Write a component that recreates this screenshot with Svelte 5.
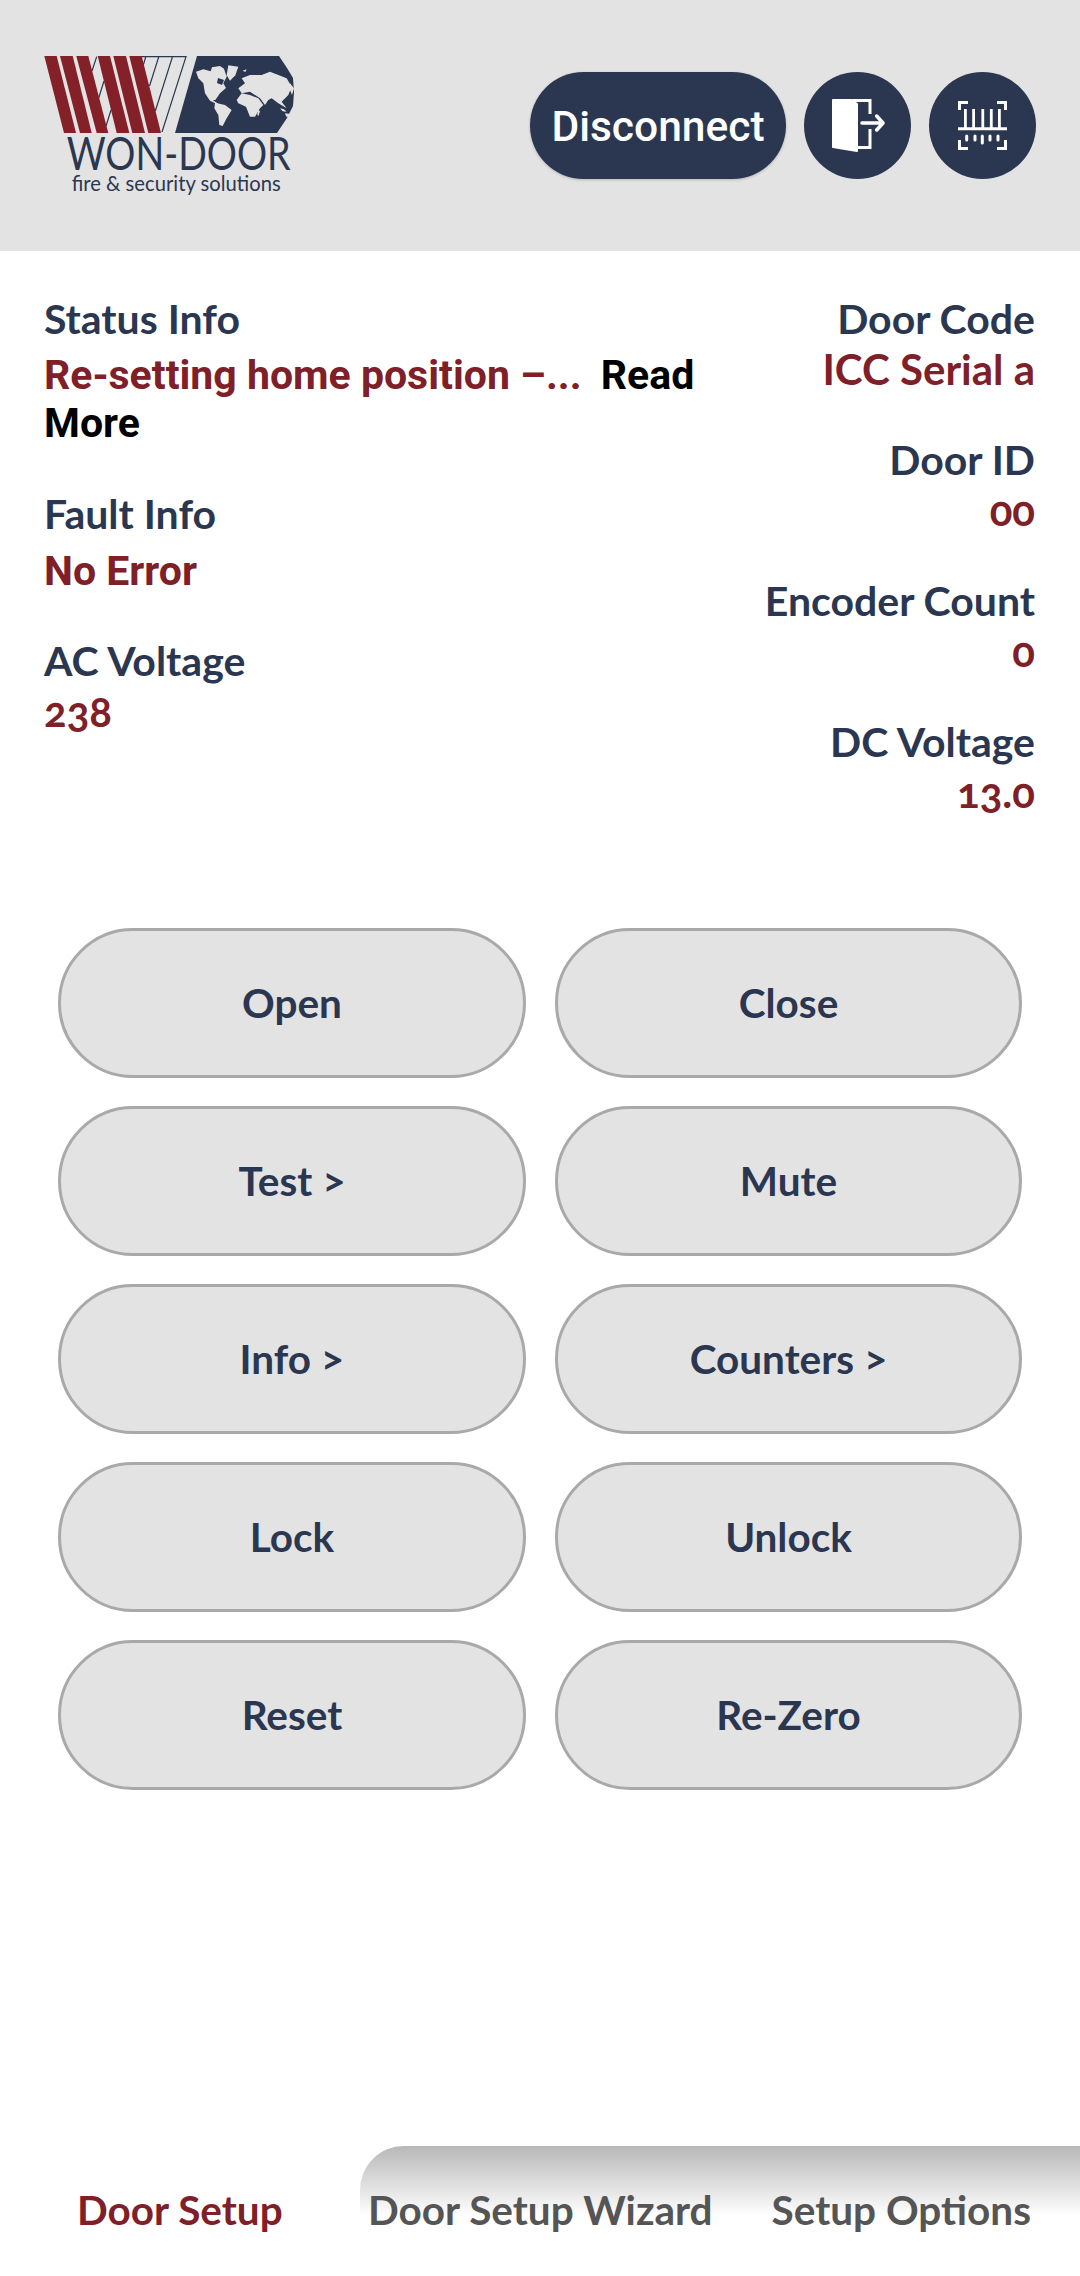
<script lang="ts">
	const leftInfo = [
		{ label: 'Fault Info', value: 'No Error', cls: 'roboto' },
		{ label: 'AC Voltage', value: '238', cls: 'num' }
	];
	const rightInfo = [
		{ label: 'Door Code', value: 'ICC Serial a' },
		{ label: 'Door ID', value: '00' },
		{ label: 'Encoder Count', value: '0' },
		{ label: 'DC Voltage', value: '13.0' }
	];
	const actions = ['Open', 'Close', 'Test >', 'Mute', 'Info >', 'Counters >', 'Lock', 'Unlock', 'Reset', 'Re-Zero'];
</script>

<div class="page">
	<header class="top">
		<svg class="logo" viewBox="0 0 252 144" aria-label="Won-Door logo">
			<g fill="none" stroke="#2b3750" stroke-width="1.2">
				<path d="M52.700 0.600 48 15M60 25 54.700 42M67 54 62 70" />
				<path d="M97 0.600h45L118 76M128.700 0 111.300 55M115 0 105.500 30M102 0 99 10" />
			</g>
			<g fill="#842028">
				<path d="M0.300 0h12.400L32 77H20z" />
				<path d="M16 0h12.700L47.700 77H36z" />
				<path d="M32.300 0h12L64.300 77H52.700z" />
				<path d="M53.700 0H66L85.300 77H72.700z" />
				<path d="M69.300 0H82L101 77H88.300z" />
				<path d="M85.300 0H97.700L117 77H104.300z" />
			</g>
			<path d="M153 0h82l8 12 6 10 1 14-1 14-6 12-10 15H131z" fill="#2b3750" />
			<g fill="#e3e3e3" transform="translate(126 -6) scale(.3333)">
				<path d="M78 65 100 58 122 64 126 52 150 48 162 56 170 80 160 100 168 114 150 130 136 150 128 150 150 165 140 162 120 152 105 130 100 100 85 85z" />
				<path d="M175 46 205 50 196 76 180 92 170 76z" />
				<path d="M135 158 165 165 185 180 170 205 158 228 148 225 145 195 133 175z" />
				<path d="M200 150 215 130 240 135 265 145 280 165 270 175 255 200 240 200 228 170 205 160z" />
				<path d="M225 100 215 85 240 75 275 75 300 65 350 85 365 110 355 135 335 155 350 175 325 160 305 145 295 150 285 165 270 145 240 125 215 130 205 115z" />
				<path d="M330 175 342 178 350 185 338 184zM345 190 363 192 369 200 349 200zM264 180 270 183 266 197 262 195z" />
				<path d="M218 62 230 58 226 66zM360 100 372 115 366 135 360 120z" />
			</g>
			<path d="M174 22 180 24 178 29 173 27z" fill="#2b3750" />
			<text class="brand" x="22.700" y="114" textLength="224" lengthAdjust="spacingAndGlyphs">WON-DOOR</text>
			<text class="tag" x="27.700" y="135" textLength="209" lengthAdjust="spacingAndGlyphs">fire &amp; security solutions</text>
		</svg>
		<div class="top-actions">
			<button class="disconnect">Disconnect</button>
			<button class="round" aria-label="Leave">
				<svg viewBox="0 0 54 55" width="54" height="55" fill="none" stroke="#fff" stroke-width="3">
					<path d="M2 2H21L26 6V53L2 49z" fill="#fff" stroke-width="2" stroke-linejoin="round" />
					<path d="M22 2.500H39V16M39 31V49.500H27" />
					<path d="M31 25H50.500M45.700 18 52 25l-6.300 7" stroke-width="3.500" stroke-linecap="round" stroke-linejoin="round" />
				</svg>
			</button>
			<button class="round" aria-label="Scan">
				<svg viewBox="0 0 49 49" width="49" height="49" fill="none" stroke="#fff" stroke-width="3">
					<path d="M1.500 9V1.500H10M39 1.500H47.500V9M1.500 39V47.500H10M39 47.500H47.500V39" />
					<path d="M0 27.700H49" stroke-linecap="round" />
					<path d="M7.400 8V27M15.600 8V27M24.800 8V27M33.300 8V27M41.400 8V27" stroke-width="2.800" />
					<path d="M8.700 35V39M17 35V39M24.300 35V42M32 35V39M40 35V39" stroke-linecap="round" />
				</svg>
			</button>
		</div>
	</header>

	<section class="info">
		<div class="col">
			<div class="item status">
				<div class="label">Status Info</div>
				<div class="status-text">
					<span class="value roboto">Re-setting home position –...</span>
					<span class="more">Read More</span>
				</div>
			</div>
			{#each leftInfo as row}
				<div class="item">
					<div class="label">{row.label}</div>
					<div class={['value', row.cls]}>{row.value}</div>
				</div>
			{/each}
		</div>
		<div class="col right">
			{#each rightInfo as row}
				<div class="item">
					<div class="label">{row.label}</div>
					<div class="value num">{row.value}</div>
				</div>
			{/each}
		</div>
	</section>

	<section class="actions">
		{#each actions as action}
			<button class="action">{action}</button>
		{/each}
	</section>

	<nav class="tabs">
		<span class="tab active">Door Setup</span>
		<div class="rest">
			<span class="tab">Door Setup Wizard</span>
			<span class="tab">Setup Options</span>
		</div>
	</nav>
</div>

<style>
	:global(body) {
		margin: 0;
		background: #fff;
	}

	.page {
		display: flex;
		flex-direction: column;
		width: 1080px;
		height: 2276px;
		overflow: hidden;
		font-family: Lato, 'Liberation Sans', sans-serif;
	}

	.top {
		display: flex;
		align-items: flex-start;
		justify-content: space-between;
		height: 251px;
		box-sizing: border-box;
		padding: 56px 44px 0;
		background: #e3e3e3;
	}

	.logo {
		width: 252px;
		height: 144px;
	}

	.brand {
		font-size: 46px;
		font-weight: 400;
		fill: #2b3750;
		font-family: Lato, sans-serif;
	}

	.tag {
		font-size: 21px;
		font-weight: 400;
		fill: #2b3750;
		font-family: Lato, sans-serif;
	}

	.top-actions {
		display: flex;
		gap: 18px;
		margin-top: 16px;
	}

	button {
		border: none;
		padding: 0;
		font-family: inherit;
	}

	.disconnect {
		width: 256px;
		height: 107px;
		padding-top: 2px;
		border-radius: 54px;
		background: #2b3750;
		color: #fff;
		font: 500 42.500px Roboto, sans-serif;
		box-shadow: 0 1px 3px rgba(0, 0, 0, 0.2);
	}

	.round {
		display: flex;
		align-items: center;
		justify-content: center;
		width: 107px;
		height: 107px;
		border-radius: 50%;
		background: #2b3750;
	}

	.info {
		display: flex;
		justify-content: space-between;
		padding: 43px 45px 0 44px;
		height: 598px;
		box-sizing: border-box;
	}

	.col {
		display: flex;
		flex-direction: column;
		width: 670px;
	}

	.right {
		width: auto;
		gap: 41px;
		text-align: right;
	}

	.label {
		font-size: 41px;
		font-weight: 700;
		line-height: 50px;
		color: #2b3750;
	}

	.value {
		font-size: 42px;
		font-weight: 700;
		line-height: 50px;
		color: #7f2029;
	}

	.num {
		font-variant-numeric: oldstyle-nums;
	}

	.roboto {
		margin-top: 6px;
		font: 700 41px/52px Roboto, sans-serif;
	}

	.status-text {
		margin-top: 7px;
		font: 700 41px/48px Roboto, sans-serif;
	}

	.status-text .value {
		display: inline;
		line-height: 48px;
	}

	.more {
		margin-left: 9px;
		color: #000;
	}

	.status {
		margin-bottom: 42px;
	}

	.item:nth-child(2) {
		margin-bottom: 39px;
	}

	.right .item:nth-child(2) {
		margin-bottom: 0;
	}

	.actions {
		display: grid;
		grid-template-columns: 468px 467px;
		grid-auto-rows: 150px;
		column-gap: 29px;
		row-gap: 28px;
		padding: 79px 0 0 58px;
	}

	.action {
		padding-bottom: 2px;
		border: 3px solid #a9a9a9;
		border-radius: 75px;
		background: #e3e3e3;
		color: #2b3750;
		font-size: 40.500px;
		font-weight: 700;
	}

	.tabs {
		display: flex;
		margin-top: auto;
		height: 130px;
	}

	.rest {
		flex: 1;
		display: flex;
		justify-content: space-between;
		padding: 0 49px 0 8px;
		border-top-left-radius: 44px;
		background: linear-gradient(#b8b8b8, #fff 54%);
	}

	.tab {
		font-size: 40.500px;
		font-weight: 700;
		line-height: 128px;
		color: #555;
	}

	.active {
		width: 360px;
		padding-left: 77px;
		box-sizing: border-box;
		color: #7f2029;
	}
</style>
